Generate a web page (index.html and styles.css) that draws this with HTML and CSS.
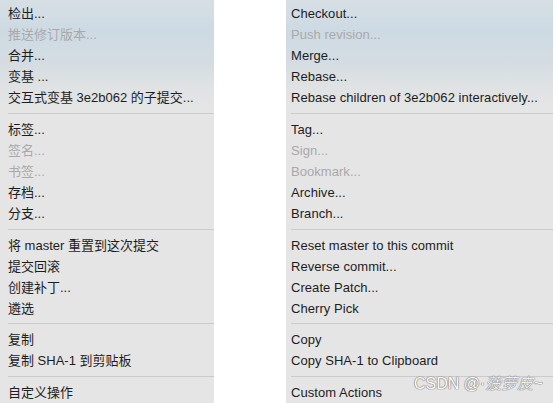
FILE: index.html
```html
<!DOCTYPE html>
<html lang="zh">
<head>
<meta charset="utf-8">
<title>Menus</title>
<link rel="stylesheet" href="styles.css">
</head>
<body>
<div class="stage">
  <div class="menu menu-zh">
    <div class="item">检出...</div>
    <div class="item disabled">推送修订版本...</div>
    <div class="item">合并...</div>
    <div class="item">变基 ...</div>
    <div class="item">交互式变基 3e2b062 的子提交...</div>
    <div class="sep"></div>
    <div class="item">标签...</div>
    <div class="item disabled">签名...</div>
    <div class="item disabled">书签...</div>
    <div class="item">存档...</div>
    <div class="item">分支...</div>
    <div class="sep"></div>
    <div class="item">将 master 重置到这次提交</div>
    <div class="item">提交回滚</div>
    <div class="item">创建补丁...</div>
    <div class="item">遴选</div>
    <div class="sep"></div>
    <div class="item">复制</div>
    <div class="item">复制 SHA-1 到剪贴板</div>
    <div class="sep"></div>
    <div class="item">自定义操作</div>
  </div>
  <div class="menu menu-en">
    <div class="item">Checkout...</div>
    <div class="item disabled">Push revision...</div>
    <div class="item">Merge...</div>
    <div class="item">Rebase...</div>
    <div class="item">Rebase children of 3e2b062 interactively...</div>
    <div class="sep"></div>
    <div class="item">Tag...</div>
    <div class="item disabled">Sign...</div>
    <div class="item disabled">Bookmark...</div>
    <div class="item">Archive...</div>
    <div class="item">Branch...</div>
    <div class="sep"></div>
    <div class="item">Reset master to this commit</div>
    <div class="item">Reverse commit...</div>
    <div class="item">Create Patch...</div>
    <div class="item">Cherry Pick</div>
    <div class="sep"></div>
    <div class="item">Copy</div>
    <div class="item">Copy SHA-1 to Clipboard</div>
    <div class="sep"></div>
    <div class="item">Custom Actions</div>
    <div class="watermark">CSDN @·<span class="wm-cjk">菠萝皮</span>~</div>
  </div>
</div>
</body>
</html>
```
FILE: styles.css
```css
html, body {
  margin: 0;
  padding: 0;
  background: #ffffff;
}
body {
  width: 557px;
  height: 403px;
  overflow: hidden;
  font-family: "Liberation Sans", "Noto Sans CJK SC", sans-serif;
  font-size: 13px;
  color: #1d1d1d;
}
.stage {
  display: flex;
  gap: 72px;
  height: 403px;
}
.menu {
  position: relative;
  display: flex;
  flex-direction: column;
  padding-top: 3px;
  height: 403px;
  box-sizing: border-box;
  background: linear-gradient(to bottom,
    #d7dfe5 0px,
    #cddae3 30px,
    #d3dce2 60px,
    #dfe2e3 85px,
    #e5e5e5 110px,
    #e5e5e5 100%);
}
.menu-zh {
  width: 214px;
  padding-left: 8px;
}
.menu-en {
  width: 267px;
  padding-left: 5px;
  letter-spacing: 0.05px;
}
.item {
  height: 21px;
  line-height: 21px;
  white-space: nowrap;
}
.disabled {
  color: #a9a9a9;
}
.sep {
  height: 11px;
  display: flex;
  align-items: center;
}
.sep::before {
  content: "";
  flex: 1;
  height: 1px;
  background: #cbcbcb;
}
.watermark {
  position: absolute;
  left: 128px;
  top: 374px;
  font-size: 16px;
  line-height: 20px;
  color: #ffffff;
  letter-spacing: 0;
  white-space: nowrap;
  text-shadow: 0 0 1px #6f6f6f, 0 0 1px #6f6f6f, 0 0 1px #8a8a8a;
}
.wm-cjk {
  font-style: italic;
  font-weight: 300;
}
```
